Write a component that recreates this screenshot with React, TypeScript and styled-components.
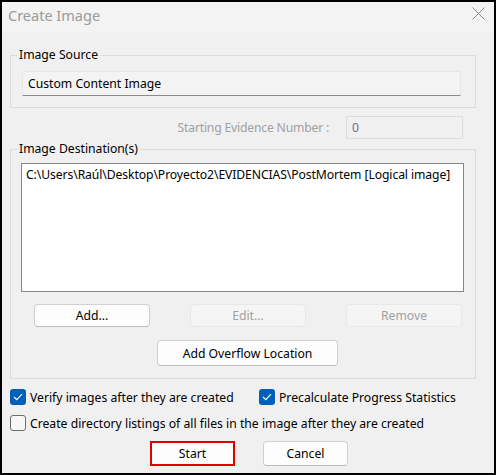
import styled, { createGlobalStyle } from 'styled-components';

const GlobalStyle = createGlobalStyle`
    html, body {
        margin: 0;
        padding: 0;
        background: #000;
    }
    body {
        font-family: "Noto Sans", "Open Sans", sans-serif;
        font-size: 12.2px;
        color: #000;
    }
`;

const Window = styled.div`
    width: 496px;
    height: 475px;
    box-sizing: border-box;
    border: 2px solid #000;
    background: #f0f0f0;
    display: flex;
    flex-direction: column;
    overflow: hidden;
`;

const TitleBar = styled.div`
    height: 30px;
    flex: none;
    box-sizing: border-box;
    background: #f3f3f3;
    display: flex;
    align-items: flex-start;
    justify-content: space-between;
    padding: 3px 9px 0 6px;
`;

const Title = styled.span`
    font-size: 14.5px;
    line-height: 20px;
    color: #9a9a9a;
`;

const CloseWrap = styled.span`
    margin-top: 2px;
    display: flex;
`;

const Body = styled.div`
    padding: 14px 18px 0 8px;
    display: flex;
    flex-direction: column;
`;

const Group = styled.fieldset<{ pad: string; top?: number }>`
    margin: ${props => props.top ?? 0}px 0 0 0;
    min-width: 0;
    border: 1px solid #dcdcdc;
    padding: ${props => props.pad};
    display: flex;
    flex-direction: column;
`;

const Legend = styled.legend<{ shift: number }>`
    padding: 0 2px;
    margin-left: ${props => props.shift}px;
    line-height: 18px;
    height: 18px;
`;

const ReadOnlyField = styled.div`
    height: 25px;
    box-sizing: border-box;
    border: 1px solid #e6e6e6;
    border-bottom-color: #8a8a8a;
    border-radius: 3px 3px 0 0;
    background: #f3f3f3;
    display: flex;
    align-items: center;
    padding: 0 5px;
`;

const EvidenceRow = styled.div`
    margin-top: 8px;
    height: 23px;
    display: flex;
    align-items: center;
    justify-content: flex-end;
    gap: 17px;
    padding-right: 13px;
`;

const DisabledLabel = styled.span`
    color: #a0a0a0;
    letter-spacing: -0.2px;
`;

const SmallInput = styled.div`
    width: 117px;
    height: 23px;
    box-sizing: border-box;
    border: 1px solid #dcdcdc;
    background: #f0f0f0;
    display: flex;
    align-items: center;
    padding: 0 5px;
    color: #6e6e96;
`;

const ListBox = styled.div`
    height: 129px;
    box-sizing: border-box;
    border: 1px solid #828790;
    background: #fff;
    padding: 2px 4px;
    line-height: 17px;
    white-space: nowrap;
    letter-spacing: -0.1px;
`;

const ButtonRow = styled.div`
    margin-top: 12px;
    display: flex;
    gap: 40px;
    padding-left: 13px;
`;

const Button = styled.button<{ w: number; h: number; primary?: boolean }>`
    width: ${props => props.w}px;
    height: ${props => props.h}px;
    box-sizing: border-box;
    margin: 0;
    padding: 0;
    font: inherit;
    color: #000;
    background: #fdfdfd;
    border: ${props => props.primary ? '2px solid #e00000' : '1px solid #d0d0d0'};
    border-bottom-color: ${props => props.primary ? '#e00000' : '#bcbcbc'};
    border-radius: ${props => props.primary ? 0 : 4}px;

    &:disabled {
        color: #a0a0a0;
        background: #f5f5f5;
        border-color: #e8e8e8;
    }
`;

const OverflowRow = styled.div`
    margin-top: 13px;
    padding-left: 136px;
    display: flex;
`;

const Checks = styled.div`
    margin-top: 10px;
    display: grid;
    grid-template-columns: 249px auto;
    row-gap: 10px;
`;

const CheckItem = styled.label<{ span?: boolean }>`
    display: flex;
    align-items: center;
    gap: 4px;
    height: 16px;
    white-space: nowrap;
    grid-column: ${props => props.span ? '1 / span 2' : 'auto'};
`;

const Box = styled.span<{ checked: boolean }>`
    width: 16px;
    height: 16px;
    flex: none;
    box-sizing: border-box;
    border-radius: 3px;
    background: ${props => props.checked ? '#005fb8' : '#f7f7f7'};
    border: ${props => props.checked ? 'none' : '1px solid #6e6e6e'};
    display: flex;
    align-items: center;
    justify-content: center;
`;

const FooterRow = styled.div`
    margin-top: 10px;
    display: flex;
    gap: 28px;
    padding-left: 140px;
`;

const CloseIcon = () => (
    <CloseWrap>
        <svg width="13" height="13" viewBox="0 0 13 13">
            <path d="M0.5 0.5 L12.5 12.5 M12.5 0.5 L0.5 12.5" stroke="#8a8a8a" strokeWidth="1" fill="none" />
        </svg>
    </CloseWrap>
);

const Check = ({ checked }: { checked: boolean }) => (
    <Box checked={checked}>
        {checked &&
            <svg width="10" height="8" viewBox="0 0 10 8">
                <path d="M1 4 L3.8 6.6 L9 1.2" stroke="#fff" strokeWidth="1.2" fill="none" />
            </svg>
        }
    </Box>
);

export default function App() {
    return (
        <>
            <GlobalStyle />
            <Window>
                <TitleBar>
                    <Title>Create Image</Title>
                    <CloseIcon />
                </TitleBar>
                <Body>
                    <Group pad="7px 14px 11px 11px">
                        <Legend shift={-5}>Image Source</Legend>
                        <ReadOnlyField>Custom Content Image</ReadOnlyField>
                    </Group>

                    <EvidenceRow>
                        <DisabledLabel>Starting Evidence Number :</DisabledLabel>
                        <SmallInput>0</SmallInput>
                    </EvidenceRow>

                    <Group pad="5px 11px 12px 10px" top={1}>
                        <Legend shift={-4}>Image Destination(s)</Legend>
                        <ListBox>C:\Users\Raúl\Desktop\Proyecto2\EVIDENCIAS\PostMortem [Logical image]</ListBox>
                        <ButtonRow>
                            <Button w={116} h={23}>Add...</Button>
                            <Button w={116} h={23} disabled>Edit...</Button>
                            <Button w={116} h={23} disabled>Remove</Button>
                        </ButtonRow>
                        <OverflowRow>
                            <Button w={181} h={26}>Add Overflow Location</Button>
                        </OverflowRow>
                    </Group>

                    <Checks>
                        <CheckItem><Check checked />Verify images after they are created</CheckItem>
                        <CheckItem><Check checked />Precalculate Progress Statistics</CheckItem>
                        <CheckItem span><Check checked={false} />Create directory listings of all files in the image after they are created</CheckItem>
                    </Checks>

                    <FooterRow>
                        <Button w={85} h={25} primary>Start</Button>
                        <Button w={85} h={25}>Cancel</Button>
                    </FooterRow>
                </Body>
            </Window>
        </>
    );
}
